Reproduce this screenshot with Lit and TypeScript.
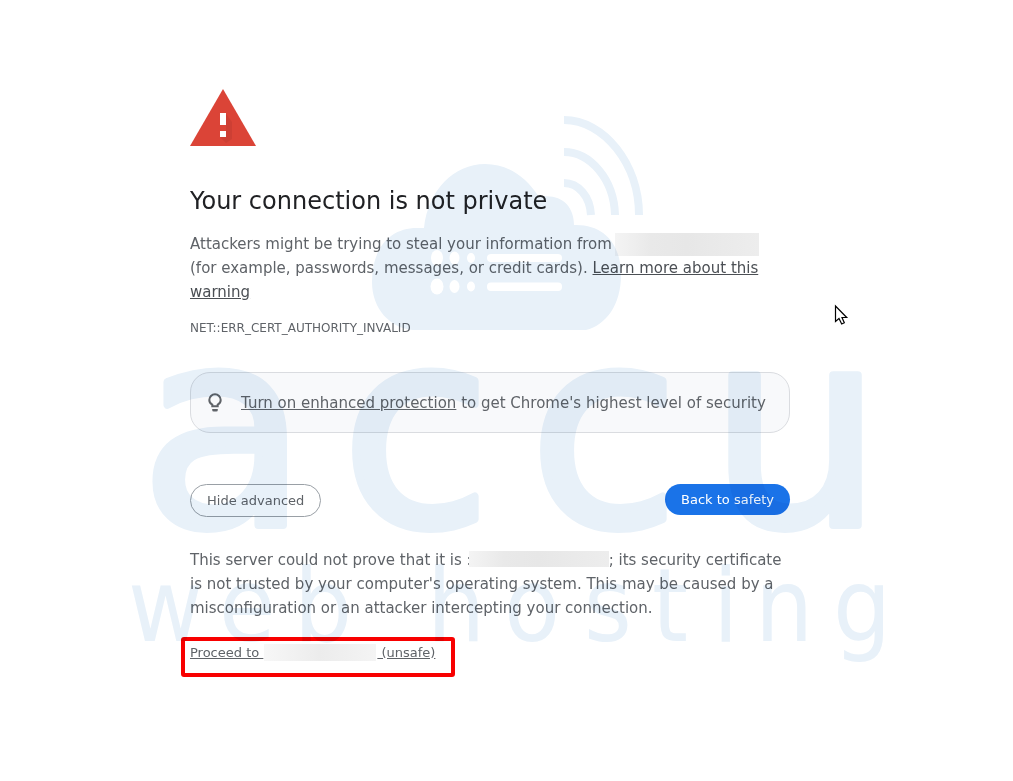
import { LitElement, html, css } from "lit";
import { customElement, state } from "lit/decorators.js";

@customElement("brand-watermark")
class BrandWatermark extends LitElement {
  static styles = css`
    :host {
      position: absolute;
      inset: 0;
      display: flex;
      justify-content: center;
      align-items: flex-start;
      overflow: hidden;
      pointer-events: none;
      mix-blend-mode: multiply;
    }
    .mark {
      flex: none;
      fill: #e8f1f9;
    }
    .signal {
      fill: none;
      stroke: #e8f1f9;
      stroke-width: 8;
    }
    .gap {
      fill: #fff;
    }
    .name {
      font: 274px "DejaVu Sans", sans-serif;
      stroke: #e8f1f9;
      stroke-width: 8;
      stroke-linejoin: round;
    }
    .tagline {
      font: 102px "Liberation Sans Narrow", "DejaVu Sans Condensed", sans-serif;
    }
  `;

  render() {
    return html`
      <svg class="mark" width="1013" height="781" viewBox="0 0 1013 781" aria-hidden="true">
        <path d="M413 330 C390 328 372 309 372 282 C372 248 390 228 417 228 H424 C428 190 454 164 485 164 C508 164 526 177 539 197 C560 193 574 205 574 225 C604 224 621 244 621 275 C621 305 606 325 586 330 Z" />
        <g class="gap">
          <ellipse cx="437" cy="258" rx="6" ry="8" />
          <ellipse cx="454.500" cy="258" rx="5" ry="6.500" />
          <ellipse cx="471" cy="258" rx="4" ry="5" />
          <rect x="487" y="254" width="75" height="8" rx="4" />
          <ellipse cx="437" cy="286.500" rx="6.500" ry="8" />
          <ellipse cx="454.500" cy="286.500" rx="5" ry="6.500" />
          <ellipse cx="471" cy="286.500" rx="4" ry="5" />
          <rect x="487" y="282.500" width="75" height="8.500" rx="4" />
        </g>
        <g class="signal">
          <path d="M564 120 C604 120 639 164 639 215" />
          <path d="M564 152 C590 152 614 179 615 215" />
          <path d="M564 183 C578 183 590 196 591 215" />
        </g>
        <text class="name" y="525" x="140 341 529 709">accu</text>
        <text class="tagline" y="641" x="128 219 294 427 504 584 652 713 755 833">webhosting</text>
      </svg>
    `;
  }
}

@customElement("app-root")
class AppRoot extends LitElement {
  @state() private expanded = true;

  static styles = css`
    :host {
      display: block;
      position: relative;
      box-sizing: border-box;
      min-height: 100vh;
      padding: 89px 33px 64px 0;
      background: #fff;
      color: #5f6368;
      font: 15px/24px "DejaVu Sans", sans-serif;
    }
    .page {
      box-sizing: border-box;
      max-width: 600px;
      margin: 0 auto;
    }
    .warning {
      display: block;
    }
    h1 {
      margin: 40px 0 16px;
      font-size: 24px;
      line-height: 30px;
      font-weight: 400;
      color: #202124;
    }
    p {
      margin: 0;
    }
    a {
      color: inherit;
      text-decoration: underline;
    }
    .intro a {
      color: #4b4f54;
    }
    .code {
      margin-top: 12px;
      font-size: 12px;
    }
    .redacted {
      display: inline-block;
      box-sizing: border-box;
      vertical-align: middle;
      background: linear-gradient(90deg, #f4f4f4, #e9e9e9 25%, #e7e7e7 50%, #ededed);
    }
    .host-wide {
      width: 144px;
      height: 23px;
      margin: -4px 8px -4px -2px;
    }
    .host-mid {
      width: 140px;
      height: 16px;
      margin: 0 0 4px -3px;
    }
    .host-small {
      width: 112px;
      height: 17px;
      margin: 0 1px 2px;
      background: linear-gradient(90deg, #f7f7f7, #ececec 50%, #f4f4f4);
    }
    .tip {
      display: flex;
      align-items: center;
      gap: 16px;
      margin-top: 32px;
      padding: 18px 16px 17px 15px;
      border: 1px solid #dadce0;
      border-radius: 20px;
      background: #f8f9fb;
    }
    .tip svg {
      flex: none;
    }
    .actions {
      display: flex;
      justify-content: space-between;
      align-items: flex-start;
      margin: 51px 0 31px;
    }
    button {
      padding: 8px 16px;
      border: 0;
      border-radius: 17px;
      background: #1a73e8;
      color: #fff;
      font: 13px/15px "DejaVu Sans", sans-serif;
      cursor: pointer;
    }
    .secondary {
      border: 1px solid #9aa0a6;
      background: #fff;
      color: #5f6368;
    }
    .proceed {
      display: block;
      box-sizing: border-box;
      width: max-content;
      max-width: 100%;
      height: 40px;
      margin: 17px 0 0 -9px;
      padding: 0 16px 0 5px;
      border: 4px solid #f80000;
      border-radius: 3px;
      font-size: 13px;
    }
    .pointer {
      position: absolute;
      left: 834px;
      top: 304px;
    }
  `;

  render() {
    return html`
      <main class="page">
        <svg class="warning" width="66" height="57" viewBox="0 0 66 57" role="img" aria-label="Warning">
          <path d="M33 0 66 57H0Z" fill="#db4437" />
          <path d="M36 25 42 33 42 50 36 54 30 48 36 42Z" fill="#b93a2f" opacity=".4" />
          <path d="M30 24h6v12h-6zM30 42h6v6h-6z" fill="#fff" />
        </svg>
        <h1>Your connection is not private</h1>
        <p class="intro">
          Attackers might be trying to steal your information from
          <span class="redacted host-wide"></span>
          (for example, passwords, messages, or credit cards).
          <a href="#learn">Learn more about this warning</a>
        </p>
        <p class="code">NET::ERR_CERT_AUTHORITY_INVALID</p>
        <div class="tip">
          <svg width="19" height="20" viewBox="0 0 19 20" aria-hidden="true">
            <path
              d="M6.300 13.200V11.600C4.400 10.600 3.300 8.900 3.300 7A5.700 5.700 0 0 1 14.700 7C14.700 8.900 13.600 10.600 11.700 11.600V13.200Z"
              fill="none" stroke="#5f6368" stroke-width="2" />
            <path d="M6.200 16H11.800V17A1.500 1.500 0 0 1 10.300 18.500H7.700A1.500 1.500 0 0 1 6.200 17Z" fill="#5f6368" />
          </svg>
          <p><a href="#protection">Turn on enhanced protection</a> to get Chrome's highest level of security</p>
        </div>
        <div class="actions">
          <button class="secondary" aria-expanded=${this.expanded} @click=${() => (this.expanded = !this.expanded)}>
            ${this.expanded ? "Hide advanced" : "Advanced"}
          </button>
          <button>Back to safety</button>
        </div>
        ${this.expanded
          ? html`
              <p>
                This server could not prove that it is :<span class="redacted host-mid"></span>; its security
                certificate is not trusted by your computer's operating system. This may be caused by a
                misconfiguration or an attacker intercepting your connection.
              </p>
              <a class="proceed" href="#proceed">Proceed to <span class="redacted host-small"></span> (unsafe)</a>
            `
          : null}
      </main>
      <brand-watermark></brand-watermark>
      <svg class="pointer" width="15" height="22" viewBox="0 0 15 22" aria-hidden="true">
        <path d="M1.500 2V17.500L5 14.500 7.700 20 10.300 18.800 8 13.500H12.700Z" fill="#fff" stroke="#000" stroke-width="1.200" />
      </svg>
    `;
  }
}
